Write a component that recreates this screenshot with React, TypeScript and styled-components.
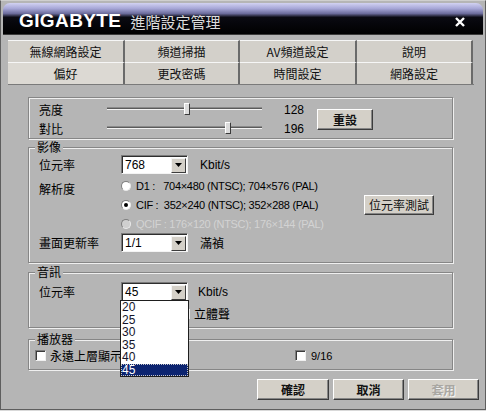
import React from 'react';
import styled, { createGlobalStyle } from 'styled-components';

const GlobalStyle = createGlobalStyle`
  html, body {
    margin: 0;
    padding: 0;
    background: #d9d9d9;
  }
  body {
    font-family: 'Noto Sans CJK TC', 'Liberation Sans', sans-serif;
    color: #000;
  }
`;

const CJK = `'Noto Sans CJK TC', 'Liberation Sans', sans-serif`;
const LATIN = `'Liberation Sans', 'Noto Sans CJK TC', sans-serif`;

const Window = styled.div`
  width: 486px;
  height: 410px;
  box-sizing: border-box;
  background: #b5b5b5;
  border: 1px solid #5e5e5e;
  border-top-color: #cfcfcf;
  display: flex;
  flex-direction: column;
`;

const TitleBar = styled.div`
  height: 32px;
  margin: 2px 2px 0;
  box-sizing: border-box;
  border-radius: 7px 7px 0 0;
  background: linear-gradient(
    to bottom,
    #d2d2f2 0%,
    #a6a6d6 18%,
    #6c6c9c 34%,
    #0a0a12 46%,
    #000 100%
  );
  border-bottom: 1px solid #3a3a3a;
  display: flex;
  align-items: center;
  padding: 5px 18px 0 16px;
`;

const Brand = styled.span`
  font-family: ${LATIN};
  font-weight: 700;
  font-size: 19px;
  letter-spacing: 0.4px;
  color: #fff;
`;

const Caption = styled.span`
  font-family: ${CJK};
  font-size: 15px;
  color: #dcdcdc;
  margin-left: 9px;
`;

const CloseIcon = styled.svg`
  margin-left: auto;
  margin-top: 2px;
`;

const TabStrip = styled.div`
  margin: 5px 11px 0 7px;
  display: grid;
  grid-template-columns: 117px 115px 117px 116px;
  grid-auto-rows: 22px;
  border-bottom: 1px solid #7a7a7a;
`;

const Tab = styled.div<{ $active?: boolean }>`
  background: ${(p) => (p.$active ? '#dcd9d3' : '#d3d0ca')};
  border-top: 1px solid #f6f6f6;
  border-right: 2px solid #6a6a6a;
  display: flex;
  align-items: center;
  justify-content: center;
  font-family: ${CJK};
  font-size: 12px;
  color: #111;
`;

const Content = styled.div`
  padding: 0 32px 0 27px;
  display: flex;
  flex-direction: column;
`;

const GroupBox = styled.div<{ $h: number; $mt: number }>`
  position: relative;
  height: ${(p) => p.$h}px;
  margin-top: ${(p) => p.$mt}px;
  box-sizing: border-box;
  border: 1px solid #868686;
  box-shadow: inset 1px 1px 0 #efefef, 1px 1px 0 #efefef;
`;

const GroupTitle = styled.span`
  position: absolute;
  top: -8px;
  left: 6px;
  padding: 0 2px;
  background: #b5b5b5;
  font-family: ${CJK};
  font-size: 12px;
  line-height: 14px;
`;

const SliderGrid = styled.div`
  display: grid;
  grid-template-columns: 68px 155px 55px 56px;
  grid-template-rows: 19px 19px;
  padding: 2px 0 0 10px;
`;

const Label = styled.span`
  font-family: ${CJK};
  font-size: 12px;
  display: flex;
  align-items: center;
`;

const Value = styled.span`
  font-family: ${LATIN};
  font-size: 12px;
  display: flex;
  align-items: center;
  padding-left: 22px;
`;

const Track = styled.div`
  position: relative;
  &::before {
    content: '';
    position: absolute;
    left: 0;
    right: 0;
    top: 8px;
    height: 1px;
    background: #5a5a5a;
    box-shadow: 0 1px 0 #f2f2f2, 0 -1px 0 #8a8a8a;
  }
`;

const Thumb = styled.span`
  position: absolute;
  top: 3px;
  width: 6px;
  height: 12px;
  box-sizing: border-box;
  background: #dcdcdc;
  border: 1px solid;
  border-color: #fff #3a3a3a #3a3a3a #fff;
`;

const Button = styled.button<{ $w: number; $bold?: boolean }>`
  width: ${(p) => p.$w}px;
  height: 21px;
  padding: 0;
  box-sizing: border-box;
  background: #d4d0c8;
  border: 1px solid;
  border-color: #fff #3c3c3c #3c3c3c #fff;
  box-shadow: inset -1px -1px 0 #868686;
  font-family: ${CJK};
  font-size: 12px;
  font-weight: ${(p) => (p.$bold ? 700 : 400)};
  color: #111;
  &:disabled {
    color: #a9a7a2;
    text-shadow: 1px 1px 0 #f4f4f4;
  }
`;

const ResetButton = styled(Button)`
  grid-column: 4;
  grid-row: 1 / span 2;
  align-self: center;
  margin-top: 1px;
`;

const VideoGrid = styled.div`
  display: grid;
  grid-template-columns: 82px 1fr auto;
  grid-template-rows: 21px 19px 19px 19px 19px;
  padding: 7px 18px 0 10px;
`;

const Inline = styled.div`
  display: flex;
  align-items: center;
  gap: 12px;
`;

const TopInline = styled(Inline)`
  align-self: start;
  height: 19px;
`;

const Unit = styled.span`
  font-family: ${LATIN};
  font-size: 12px;
`;

const UnitCJK = styled.span`
  font-family: ${CJK};
  font-size: 12px;
`;

const ComboBox = styled.div`
  position: relative;
  width: 67px;
  height: 19px;
  box-sizing: border-box;
  background: #fff;
  border: 1px solid;
  border-color: #7a7a7a #f4f4f4 #f4f4f4 #7a7a7a;
  box-shadow: inset 1px 1px 0 #2e2e2e;
  display: flex;
  align-items: center;
  padding: 1px 1px 0 3px;
  font-family: ${LATIN};
  font-size: 12px;
`;

const ComboButton = styled.span`
  margin-left: auto;
  width: 15px;
  height: 15px;
  box-sizing: border-box;
  background: #d4d0c8;
  border: 1px solid;
  border-color: #f4f4f4 #3c3c3c #3c3c3c #f4f4f4;
  display: flex;
  align-items: center;
  justify-content: center;
`;

const RadioRow = styled.div<{ $disabled?: boolean }>`
  display: flex;
  align-items: center;
  gap: 5px;
  font-family: ${LATIN};
  font-size: 11px;
  letter-spacing: -0.3px;
  white-space: pre;
  color: ${(p) => (p.$disabled ? '#d3d3d3' : '#000')};
`;

const Radio = styled.span<{ $checked?: boolean; $disabled?: boolean }>`
  position: relative;
  width: 10px;
  height: 10px;
  box-sizing: border-box;
  border-radius: 50%;
  background: ${(p) => (p.$disabled ? '#cfcfcf' : '#fff')};
  border: 1px solid;
  border-color: #7e7e7e #eaeaea #eaeaea #7e7e7e;
  &::after {
    content: '';
    display: ${(p) => (p.$checked ? 'block' : 'none')};
    position: absolute;
    left: 2px;
    top: 2px;
    width: 4px;
    height: 4px;
    border-radius: 50%;
    background: #000;
  }
`;

const ResolutionLabel = styled(Label)`
  grid-column: 1;
  grid-row: 2;
  padding-top: 5px;
`;

const TestButton = styled(Button)`
  grid-column: 3;
  grid-row: 3;
  align-self: center;
  height: 20px;
`;

const AudioGrid = styled.div`
  display: grid;
  grid-template-columns: 82px 1fr;
  grid-template-rows: 19px 19px;
  row-gap: 3px;
  padding: 9px 0 0 10px;
`;

const CheckItem = styled.label<{ $indent?: number }>`
  display: flex;
  align-items: center;
  gap: 4px;
  margin-left: ${(p) => p.$indent ?? 0}px;
  font-family: ${CJK};
  font-size: 12px;
`;

const CheckText = styled.span`
  font-family: ${LATIN};
  font-size: 11px;
  margin-left: 1px;
`;

const CheckBox = styled.span`
  width: 11px;
  height: 11px;
  box-sizing: border-box;
  background: #fff;
  border: 1px solid;
  border-color: #7e7e7e #f0f0f0 #f0f0f0 #7e7e7e;
  box-shadow: inset 1px 1px 0 #3a3a3a;
`;

const DropList = styled.ul`
  position: absolute;
  top: 17px;
  left: -2px;
  width: 69px;
  margin: 0;
  padding: 0;
  list-style: none;
  box-sizing: border-box;
  background: #fff;
  border: 1px solid #1e1e1e;
  z-index: 2;
`;

const DropItem = styled.li<{ $selected?: boolean }>`
  height: 12.5px;
  line-height: 13px;
  padding-left: 1px;
  font-family: ${LATIN};
  font-size: 12px;
  color: ${(p) => (p.$selected ? '#fff' : '#14142a')};
  background: ${(p) => (p.$selected ? '#0c2470' : 'transparent')};
  outline: ${(p) => (p.$selected ? '1px dotted #c8c8c8' : 'none')};
  outline-offset: -1px;
`;

const PlayerRow = styled.div`
  display: grid;
  grid-template-columns: 260px auto;
  height: 19px;
  padding: 6px 0 0 6px;
`;

const ButtonRow = styled.div`
  display: flex;
  justify-content: flex-end;
  gap: 4px;
  margin-top: 9px;
  padding-right: 6px;
`;

const Arrow = () => (
  <svg width="7" height="4" viewBox="0 0 7 4">
    <polygon points="0,0 7,0 3.5,4" fill="#000" />
  </svg>
);

const Combo = ({ value, children }: { value: string; children?: React.ReactNode }) => (
  <ComboBox>
    {value}
    <ComboButton>
      <Arrow />
    </ComboButton>
    {children}
  </ComboBox>
);

const sliders = [
  { label: '亮度', value: 128 },
  { label: '對比', value: 196 },
];

const resolutions = [
  { key: 'd1', text: 'D1 :   704×480 (NTSC); 704×576 (PAL)' },
  { key: 'cif', text: 'CIF :  352×240 (NTSC); 352×288 (PAL)', checked: true },
  { key: 'qcif', text: 'QCIF : 176×120 (NTSC); 176×144 (PAL)', disabled: true },
];

const audioRates = ['20', '25', '30', '35', '40', '45'];

export default function App() {
  return (
    <>
      <GlobalStyle />
      <Window>
        <TitleBar>
          <Brand>GIGABYTE</Brand>
          <Caption>進階設定管理</Caption>
          <CloseIcon width="10" height="10" viewBox="0 0 10 10">
            <path d="M1 1 L9 9 M9 1 L1 9" stroke="#fff" strokeWidth="2.4" />
          </CloseIcon>
        </TitleBar>

        <TabStrip>
          <Tab>無線網路設定</Tab>
          <Tab>頻道掃描</Tab>
          <Tab>AV頻道設定</Tab>
          <Tab>說明</Tab>
          <Tab $active>偏好</Tab>
          <Tab>更改密碼</Tab>
          <Tab>時間設定</Tab>
          <Tab>網路設定</Tab>
        </TabStrip>

        <Content>
          <GroupBox $h={42} $mt={12}>
            <SliderGrid>
              {sliders.map((s, i) => (
                <React.Fragment key={s.label}>
                  <Label style={{ gridRow: i + 1 }}>{s.label}</Label>
                  <Track style={{ gridRow: i + 1 }}>
                    <Thumb style={{ left: Math.round((s.value / 255) * 155) - 1 }} />
                  </Track>
                  <Value style={{ gridRow: i + 1 }}>{s.value}</Value>
                </React.Fragment>
              ))}
              <ResetButton $w={56} $bold>
                重設
              </ResetButton>
            </SliderGrid>
          </GroupBox>

          <GroupBox $h={116} $mt={8}>
            <GroupTitle>影像</GroupTitle>
            <VideoGrid>
              <Label style={{ alignSelf: 'start', height: 19 }}>位元率</Label>
              <TopInline>
                <Combo value="768" />
                <Unit>Kbit/s</Unit>
              </TopInline>
              <span />
              <ResolutionLabel>解析度</ResolutionLabel>
              {resolutions.map((r, i) => (
                <RadioRow
                  key={r.key}
                  $disabled={r.disabled}
                  style={{ gridColumn: 2, gridRow: i + 2 }}
                >
                  <Radio $checked={r.checked} $disabled={r.disabled} />
                  {r.text}
                </RadioRow>
              ))}
              <TestButton $w={70}>位元率測試</TestButton>
              <Label style={{ gridColumn: 1, gridRow: 5 }}>畫面更新率</Label>
              <Inline style={{ gridColumn: 2, gridRow: 5 }}>
                <Combo value="1/1" />
                <UnitCJK>滿禎</UnitCJK>
              </Inline>
            </VideoGrid>
          </GroupBox>

          <GroupBox $h={56} $mt={9}>
            <GroupTitle>音訊</GroupTitle>
            <AudioGrid>
              <Label>位元率</Label>
              <Inline style={{ gap: 10 }}>
                <Combo value="45">
                  <DropList>
                    {audioRates.map((r) => (
                      <DropItem key={r} $selected={r === '45'}>
                        {r}
                      </DropItem>
                    ))}
                  </DropList>
                </Combo>
                <Unit>Kbit/s</Unit>
              </Inline>
              <CheckItem $indent={58} style={{ gridColumn: 2, gridRow: 2 }}>
                <CheckBox />
                立體聲
              </CheckItem>
            </AudioGrid>
          </GroupBox>

          <GroupBox $h={31} $mt={11}>
            <GroupTitle>播放器</GroupTitle>
            <PlayerRow>
              <CheckItem>
                <CheckBox />
                永遠上層顯示
              </CheckItem>
              <CheckItem>
                <CheckBox />
                <CheckText>9/16</CheckText>
              </CheckItem>
            </PlayerRow>
          </GroupBox>
        </Content>

        <ButtonRow>
          <Button $w={72} $bold>
            確認
          </Button>
          <Button $w={71} $bold>
            取消
          </Button>
          <Button $w={71} $bold disabled>
            套用
          </Button>
        </ButtonRow>
      </Window>
    </>
  );
}
